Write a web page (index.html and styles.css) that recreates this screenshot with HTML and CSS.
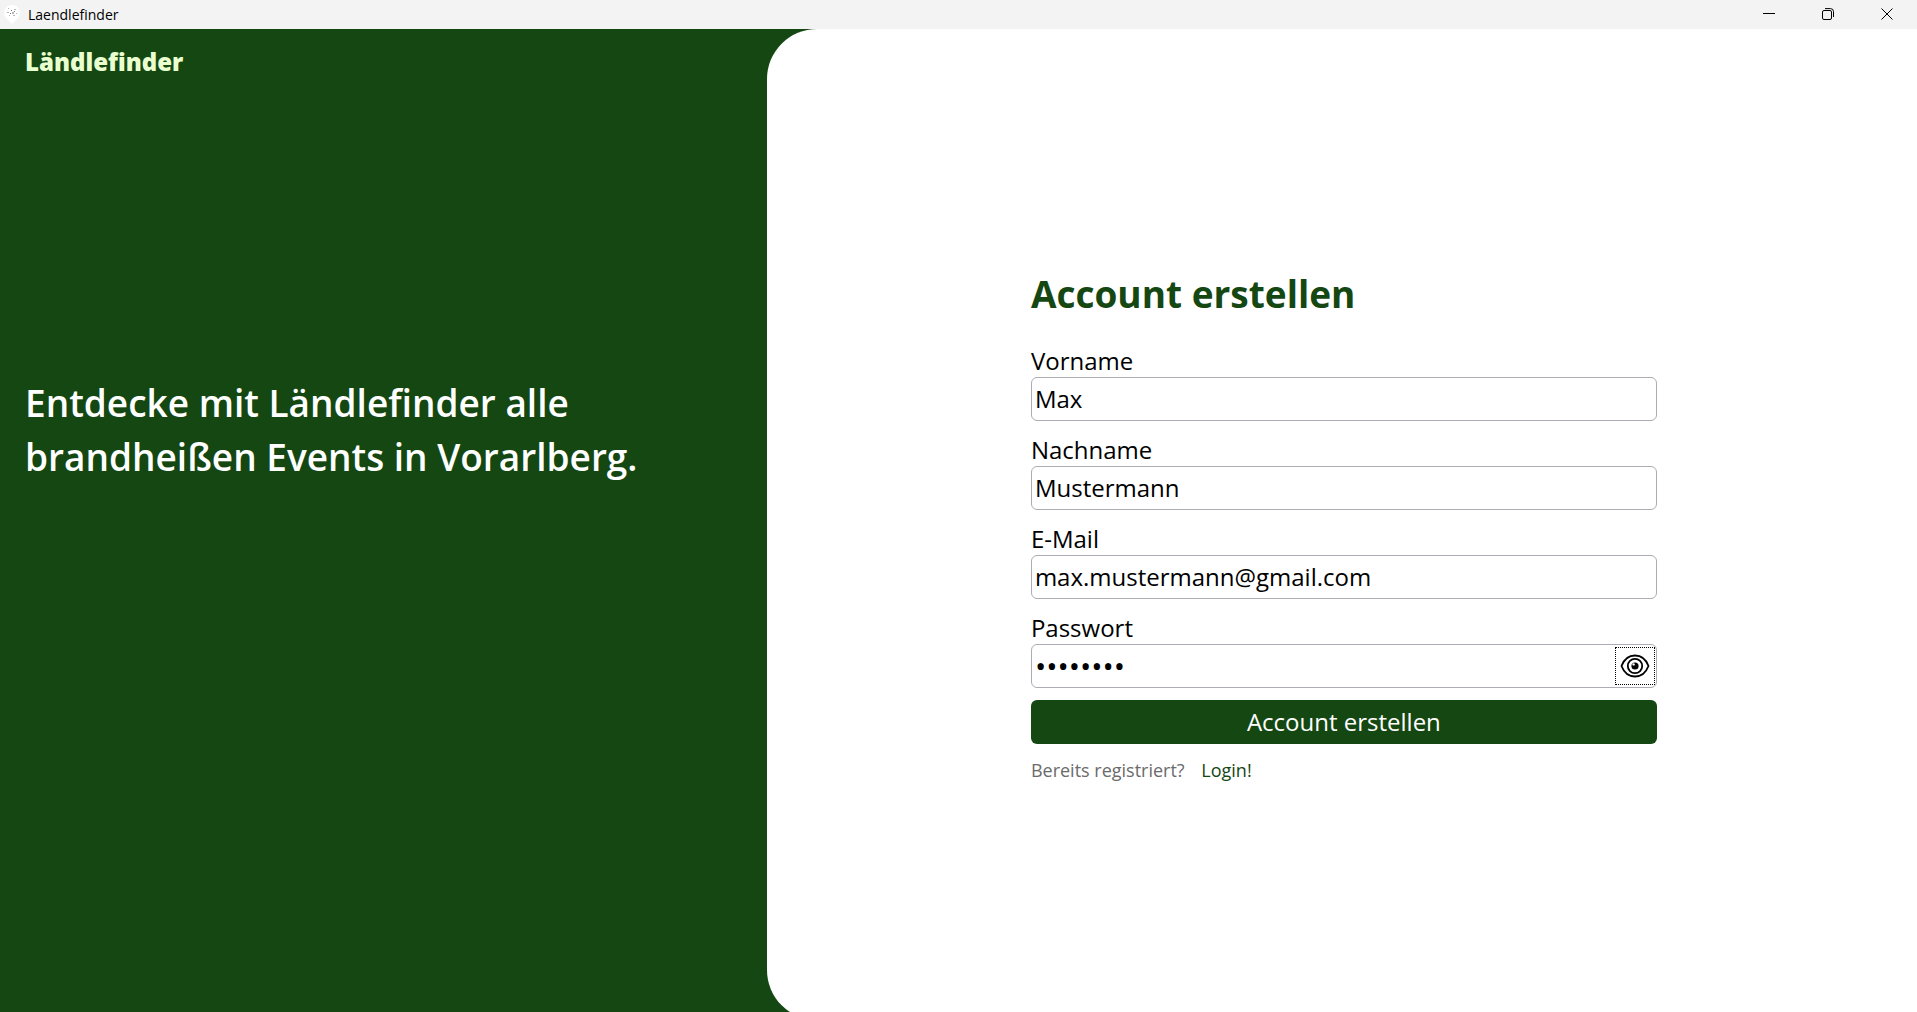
FILE: index.html
```html
<!DOCTYPE html>
<html lang="de">
<head>
<meta charset="utf-8">
<title>Laendlefinder</title>
<link rel="stylesheet" href="styles.css">
</head>
<body>
<header class="titlebar">
  <svg class="app-icon" width="16" height="20" viewBox="0 0 16 20" aria-hidden="true">
    <path d="M8 0C3.500 0 0 3.400 0 7.800c0 3.200 2 5.400 4.600 7.600L8 19l3.400-3.600C14 13.200 16 11 16 7.800 16 3.400 12.500 0 8 0z" fill="#fff"/>
    <g fill="#b5b5b5"><path d="M4 3h1v1H4zM10 4h2v1h-2zM3 7h2v1H3zM8 7h2v2H8zM12 8h1v1h-1zM5 10h1v1H5zM9 10h2v1H9z"/></g>
    <path d="M7 5h1v1H7zM10 6h1v1h-1zM6 8h1v1H6z" fill="#777"/>
  </svg>
  <span class="app-name">Laendlefinder</span>
  <div class="window-controls">
    <button class="window-button" type="button" aria-label="Minimieren"><svg width="12" height="12" viewBox="0 0 12 12"><path d="M0 5.500h12" /></svg></button>
    <button class="window-button" type="button" aria-label="Verkleinern"><svg width="12" height="12" viewBox="0 0 12 12"><rect x=".5" y="2.500" width="9" height="9" rx="1.500"/><path d="M3 .6h5.500q3 0 3 3V9"/></svg></button>
    <button class="window-button" type="button" aria-label="Schließen"><svg width="12" height="12" viewBox="0 0 12 12"><path d="M.5.5l11 11M11.500.5l-11 11"/></svg></button>
  </div>
</header>
<main class="page">
  <section class="intro">
    <div class="brand">Ländlefinder</div>
    <p class="slogan">Entdecke mit Ländlefinder alle brandheißen Events in Vorarlberg.</p>
  </section>
  <section class="panel">
    <form class="form">
      <h1 class="heading">Account erstellen</h1>
      <div class="field">
        <label for="vorname">Vorname</label>
        <input class="input" id="vorname" type="text" value="Max">
      </div>
      <div class="field">
        <label for="nachname">Nachname</label>
        <input class="input" id="nachname" type="text" value="Mustermann">
      </div>
      <div class="field">
        <label for="email">E-Mail</label>
        <input class="input" id="email" type="email" value="max.mustermann@gmail.com">
      </div>
      <div class="field">
        <label for="passwort">Passwort</label>
        <div class="input password">
          <input class="password-input" id="passwort" type="password" value="passwort">
          <button class="reveal" type="button" aria-label="Passwort anzeigen">
            <svg width="30" height="24" viewBox="0 0 30 24" fill="none" stroke="#000" stroke-width="1.800"><path d="M1.500 12C4 5.500 9 1.500 15 1.500S26 5.500 28.500 12C26 18.500 21 22.500 15 22.500S4 18.500 1.500 12z"/><circle cx="15" cy="12" r="7.200"/><circle cx="15" cy="12" r="3.600" fill="#000" stroke="none"/><circle cx="13.600" cy="10.400" r="1.200" fill="#fff" stroke="none"/></svg>
          </button>
        </div>
      </div>
      <button class="submit" type="submit">Account erstellen</button>
      <p class="login">Bereits registriert? <a class="login-link" href="#login">Login!</a></p>
    </form>
  </section>
</main>
</body>
</html>
```

FILE: styles.css
```css
* {
  box-sizing: border-box;
}

body {
  margin: 0;
  height: 100vh;
  display: flex;
  flex-direction: column;
  overflow: hidden;
  font-family: "Open Sans", "Noto Sans", sans-serif;
  font-size: 24px;
  color: #000;
}

button,
input {
  font: inherit;
  color: inherit;
}

.titlebar {
  flex: none;
  height: 29px;
  display: flex;
  align-items: center;
  padding-left: 4px;
  background: #f3f3f3;
}

.app-name {
  margin-left: 8px;
  font-size: 14px;
}

.window-controls {
  align-self: stretch;
  display: flex;
  margin-left: auto;
}

.window-button {
  width: 59px;
  display: grid;
  place-items: center;
  padding: 0 1px 1px 0;
  border: 0;
  background: none;
}

.window-button svg {
  fill: none;
  stroke: #000;
}

.page {
  flex: 1;
  display: grid;
  grid-template-columns: 2fr 3fr;
  background: #154713;
}

.intro {
  display: flex;
  flex-direction: column;
  padding: 16px 25px;
}

.brand {
  font-weight: 800;
  line-height: 34px;
  color: #eaffd0;
}

.slogan {
  margin: auto 0;
  padding-bottom: 216px;
  font-size: 37px;
  font-weight: 600;
  line-height: 54px;
  color: #fff;
}

.panel {
  height: calc(100% + 8px);
  display: grid;
  place-content: center;
  grid-template-columns: minmax(0, 626px);
  padding-left: 4px;
  border-radius: 50px 0 0 50px;
  background: #fff;
}

.form {
  display: flex;
  flex-direction: column;
  gap: 12px;
}

.heading {
  margin: 0 0 10px;
  font-size: 37px;
  line-height: 56px;
  color: #154713;
}

.field {
  display: flex;
  flex-direction: column;
  line-height: 33px;
}

.input {
  width: 100%;
  height: 44px;
  padding: 0 3px;
  border: 1px solid #abadb3;
  border-radius: 6px;
  background: #fff;
}

.password {
  display: flex;
  align-items: center;
  padding-right: 1px;
}

.password-input {
  flex: 1;
  min-width: 0;
  height: 40px;
  padding: 0;
  border: 0;
  outline: 0;
  background: none;
  font-size: 30px;
}

.reveal {
  width: 40px;
  height: 38px;
  display: grid;
  place-items: center;
  padding: 0;
  border: 1px dotted #000;
  background: none;
}

.submit {
  height: 44px;
  padding: 0;
  border: 0;
  border-radius: 6px;
  background: #154713;
  color: #fff;
}

.login {
  margin: 0;
  font-size: 18px;
  line-height: 28px;
  color: #6b6b6b;
}

.login-link {
  margin-left: 12px;
  color: #154713;
  text-decoration: none;
}
```
